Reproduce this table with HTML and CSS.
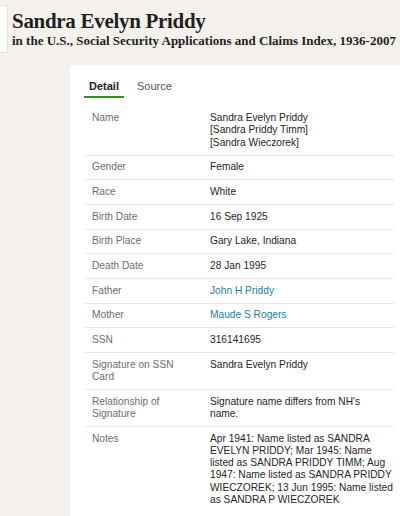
FILE: index.html
```html
<!DOCTYPE html>
<html lang="en">
<head>
<meta charset="utf-8">
<title>Sandra Evelyn Priddy</title>
<link rel="stylesheet" href="styles.css">
</head>
<body>
<header class="header">
  <div class="thumb"></div>
  <div class="titles">
    <h1 class="title">Sandra Evelyn Priddy</h1>
    <p class="subtitle">in the U.S., Social Security Applications and Claims Index, 1936-2007</p>
  </div>
</header>
<main class="card">
  <nav class="tabs">
    <span class="tab tab-active">Detail</span>
    <span class="tab">Source</span>
  </nav>
  <div class="table">
    <div class="row"><div class="label">Name</div><div class="value">Sandra Evelyn Priddy<br>[Sandra Priddy Timm]<br>[Sandra Wieczorek]</div></div>
    <div class="row"><div class="label">Gender</div><div class="value">Female</div></div>
    <div class="row"><div class="label">Race</div><div class="value">White</div></div>
    <div class="row"><div class="label">Birth Date</div><div class="value">16 Sep 1925</div></div>
    <div class="row"><div class="label">Birth Place</div><div class="value">Gary Lake, Indiana</div></div>
    <div class="row"><div class="label">Death Date</div><div class="value">28 Jan 1995</div></div>
    <div class="row"><div class="label">Father</div><div class="value"><a class="link" href="#">John H Priddy</a></div></div>
    <div class="row"><div class="label">Mother</div><div class="value"><a class="link" href="#">Maude S Rogers</a></div></div>
    <div class="row"><div class="label">SSN</div><div class="value">316141695</div></div>
    <div class="row"><div class="label">Signature on SSN Card</div><div class="value">Sandra Evelyn Priddy</div></div>
    <div class="row"><div class="label">Relationship of Signature</div><div class="value">Signature name differs from NH's<br>name.</div></div>
    <div class="row"><div class="label">Notes</div><div class="value">Apr 1941: Name listed as SANDRA<br>EVELYN PRIDDY; Mar 1945: Name<br>listed as SANDRA PRIDDY TIMM; Aug<br>1947: Name listed as SANDRA PRIDDY<br>WIECZOREK; 13 Jun 1995: Name listed<br>as SANDRA P WIECZOREK</div></div>
  </div>
</main>
</body>
</html>
```
FILE: styles.css
```css
html, body {
  margin: 0;
  padding: 0;
}
body {
  background: #f4f1ed;
  font-family: "Liberation Sans", Arial, sans-serif;
  color: #2b2b2b;
  overflow: hidden;
}
.header {
  display: flex;
  align-items: flex-start;
}
.thumb {
  width: 7px;
  height: 46px;
  margin-top: 5px;
  background: #ffffff;
  border: 1px solid #e7e3de;
  border-left: none;
}
.titles {
  margin-left: 4px;
  padding-top: 9px;
}
.title {
  margin: 0;
  font-family: "Liberation Serif", "Times New Roman", serif;
  font-weight: bold;
  font-size: 21px;
  letter-spacing: -0.3px;
  line-height: 24px;
  color: #1f1f1f;
}
.subtitle {
  margin: 0;
  font-family: "Liberation Serif", "Times New Roman", serif;
  font-weight: bold;
  font-size: 13px;
  line-height: 16px;
  white-space: nowrap;
  color: #1f1f1f;
}
.card {
  margin: 12px 0 0 70px;
  background: #ffffff;
  border-radius: 4px 0 0 0;
  padding: 15px 6px 30px 14px;
}
.tabs {
  display: flex;
  gap: 8px;
}
.tab {
  padding: 0 5px 4px;
  font-size: 11px;
  line-height: 12.3px;
  color: #555555;
  border-bottom: 2px solid transparent;
}
.tab-active {
  font-weight: bold;
  color: #222222;
  border-bottom-color: #3f8a1c;
}
.table {
  margin-top: 8px;
}
.row {
  display: grid;
  grid-template-columns: 118px 1fr;
  font-size: 10.2px;
  line-height: 12.3px;
}
.row + .row {
  border-top: 1px solid #ebe9e6;
}
.label {
  padding: 5.7px 8px;
  color: #6e6e6e;
}
.value {
  padding: 5.7px 8px;
  color: #262626;
  white-space: nowrap;
}
.link {
  color: #2a7ba3;
  text-decoration: none;
}
```
